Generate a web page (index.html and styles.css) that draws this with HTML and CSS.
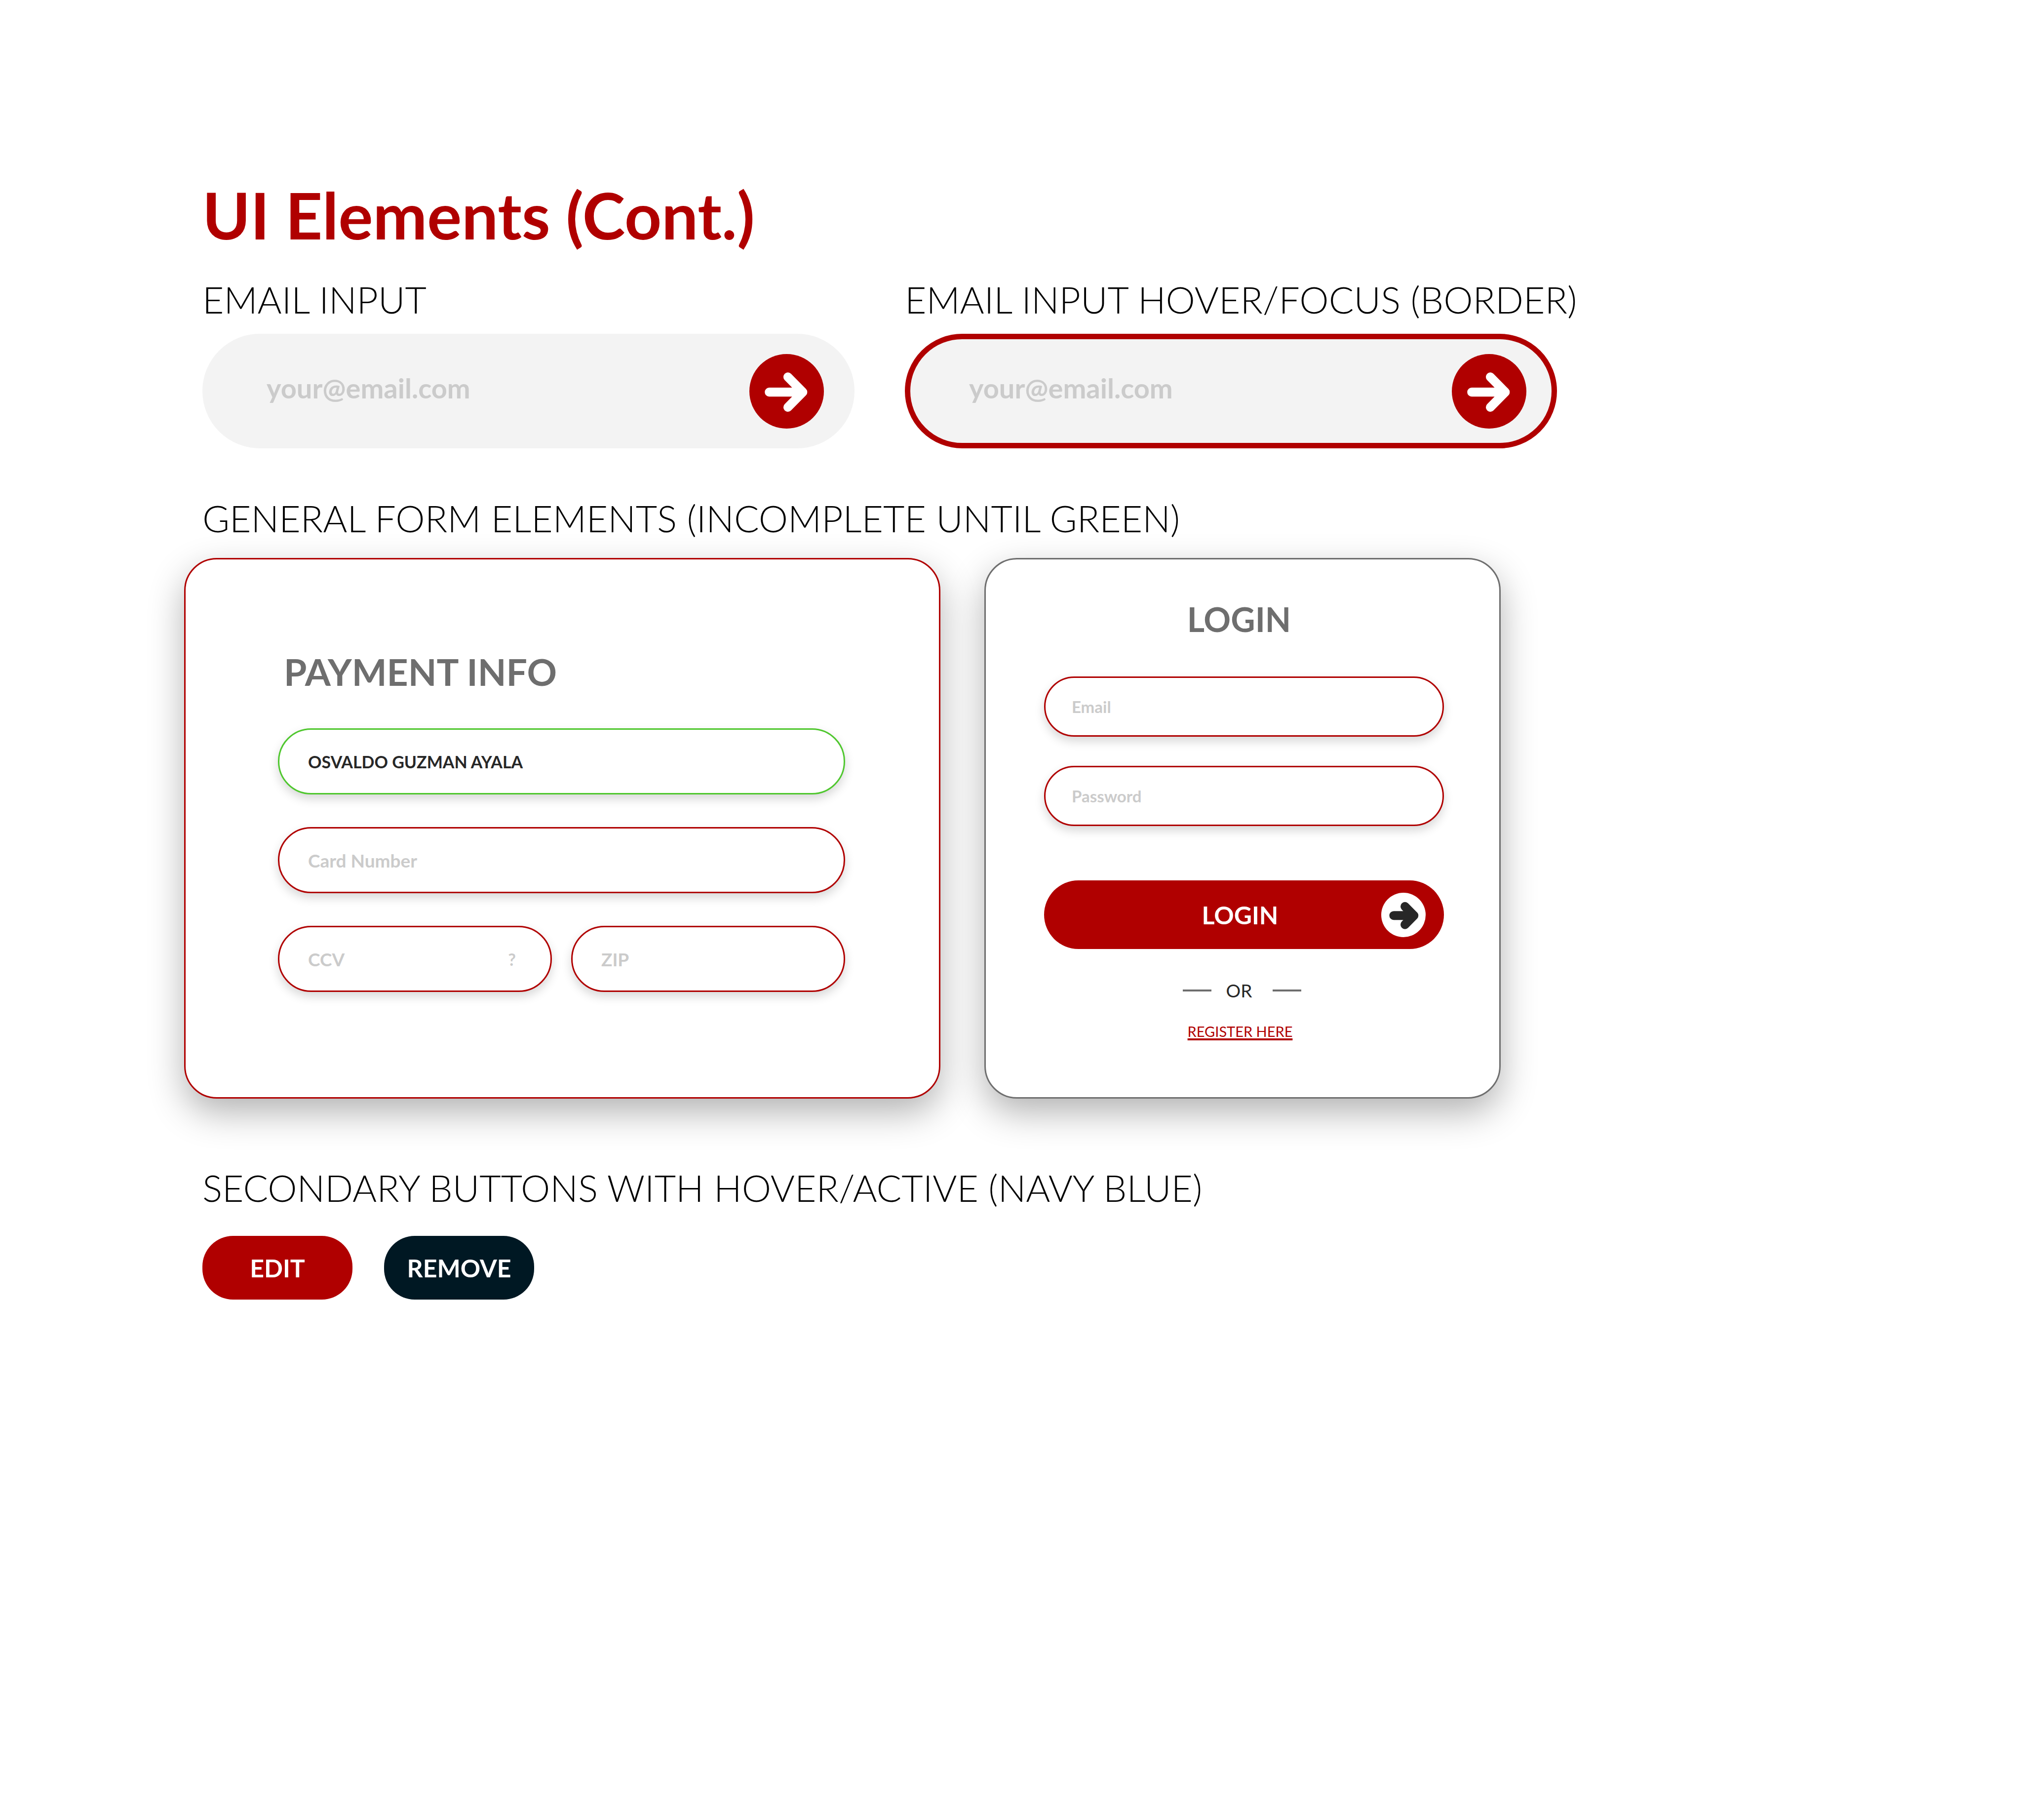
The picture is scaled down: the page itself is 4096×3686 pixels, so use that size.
FILE: index.html
```html
<!DOCTYPE html>
<html lang="en">
<head>
  <meta charset="utf-8">
  <meta name="viewport" content="width=device-width, initial-scale=1">
  <title>UI Elements (Cont.)</title>
  <link rel="stylesheet" href="styles.css">
</head>
<body>
  <main class="page">
    <h1 class="page-title">UI Elements (Cont.)</h1>

    <div class="email-grid">
      <form class="email-block">
        <label class="section-label" for="email-default">EMAIL INPUT</label>
        <div class="email-pill">
          <input class="email-input" id="email-default" type="email" placeholder="your@email.com">
          <button class="round-button" type="button" aria-label="Submit email">
            <svg class="round-icon" viewBox="0 0 184 184" aria-hidden="true"><path class="arrow" d="M49 94H132M95 56.500L132 94L95 131.500"/></svg>
          </button>
        </div>
      </form>
      <form class="email-block">
        <label class="section-label" for="email-focus">EMAIL INPUT HOVER/FOCUS (BORDER)</label>
        <div class="email-pill email-pill-active">
          <input class="email-input" id="email-focus" type="email" placeholder="your@email.com">
          <button class="round-button" type="button" aria-label="Submit email">
            <svg class="round-icon" viewBox="0 0 184 184" aria-hidden="true"><path class="arrow" d="M49 94H132M95 56.500L132 94L95 131.500"/></svg>
          </button>
        </div>
      </form>
    </div>

    <section class="forms">
      <h2 class="section-label">GENERAL FORM ELEMENTS (INCOMPLETE UNTIL GREEN)</h2>
      <div class="cards">
        <form class="card payment">
          <h3 class="card-title payment-title">PAYMENT INFO</h3>
          <div class="payment-fields">
            <div class="field field-valid">
              <input class="field-input" type="text" aria-label="Name on card" value="OSVALDO GUZMAN AYALA">
            </div>
            <div class="field">
              <input class="field-input" type="text" aria-label="Card Number" placeholder="Card Number">
            </div>
            <div class="field-row">
              <div class="field">
                <input class="field-input" type="text" aria-label="CCV" placeholder="CCV">
                <button class="field-help" type="button">?</button>
              </div>
              <div class="field">
                <input class="field-input" type="text" aria-label="ZIP" placeholder="ZIP">
              </div>
            </div>
          </div>
        </form>

        <form class="card login">
          <h3 class="card-title login-title">LOGIN</h3>
          <div class="login-fields">
            <div class="field field-small">
              <input class="field-input" type="email" aria-label="Email" placeholder="Email">
            </div>
            <div class="field field-small">
              <input class="field-input" type="password" aria-label="Password" placeholder="Password">
            </div>
          </div>
          <button class="login-button" type="button">
            <span class="login-text">LOGIN</span>
            <svg class="login-icon" viewBox="0 0 110 110" aria-hidden="true"><circle class="disc" cx="55" cy="55" r="55"/><path class="arrow arrow-dark" d="M31 56.500H81M58.700 34L81 56.500L58.700 79"/></svg>
          </button>
          <div class="divider"><span class="divider-text">OR</span></div>
          <a class="register" href="#register">REGISTER HERE</a>
        </form>
      </div>
    </section>

    <section class="buttons">
      <h2 class="section-label">SECONDARY BUTTONS WITH HOVER/ACTIVE (NAVY BLUE)</h2>
      <div class="button-row">
        <button class="button" type="button">EDIT</button>
        <button class="button button-active" type="button">REMOVE</button>
      </div>
    </section>
  </main>
</body>
</html>
```
FILE: styles.css
```css
:root {
  --red: #b00000;
  --navy: #001823;
  --green: #4fc72e;
  --grey: #6e6e6e;
  --ink: #272727;
  --hint: #cbcbcb;
  --fill: #f3f3f3;
}

*,
*::before,
*::after {
  box-sizing: border-box;
}

body {
  margin: 0;
  background: #fff;
  color: #000;
  font-family: Lato, "Open Sans", sans-serif;
}

h1,
h2,
h3 {
  margin: 0;
}

input,
button {
  margin: 0;
  padding: 0;
  border: 0;
  background: none;
  color: inherit;
  font-family: inherit;
  font-weight: 700;
}

input {
  flex: 1;
  min-width: 0;
  outline: none;
}

input::placeholder {
  color: var(--hint);
  opacity: 1;
}

button {
  cursor: pointer;
}

.page {
  min-height: 100vh;
  padding: 357px 410px;
}

.page-title {
  margin-bottom: 48px;
  color: var(--red);
  font-size: 131px;
  line-height: 156px;
}

.section-label {
  display: block;
  font-size: 75px;
  font-weight: 300;
  line-height: 90px;
  white-space: nowrap;
}

/* Email inputs */

.email-grid {
  display: grid;
  grid-template-columns: repeat(2, minmax(0, 1321px));
  gap: 102px;
}

.email-pill {
  display: flex;
  align-items: center;
  height: 232px;
  margin-top: 25px;
  padding: 0 51px 0 119px;
  border: 11px solid var(--fill);
  border-radius: 116px;
  background: var(--fill);
}

.email-pill-active {
  border-color: var(--red);
}

.email-input {
  height: 100%;
  padding-bottom: 14px;
  font-size: 56px;
}

.round-button {
  width: 151px;
  height: 151px;
  border-radius: 50%;
  background: var(--red);
}

.round-icon {
  display: block;
  width: 100%;
  height: 100%;
}

.arrow {
  fill: none;
  stroke: #fff;
  stroke-width: 22;
  stroke-linecap: round;
  stroke-linejoin: round;
}

.arrow-dark {
  stroke: var(--ink);
}

.disc {
  fill: #fff;
}

/* Cards */

.forms {
  margin-top: 96px;
}

.cards {
  display: grid;
  grid-template-columns: minmax(0, 1532px) minmax(0, 1046px);
  gap: 89px;
  margin: 36px 0 0 -37px;
}

.card {
  display: flex;
  flex-direction: column;
  border: 3px solid var(--red);
  border-radius: 66px;
  background: #fff;
  box-shadow: 0 28px 72px rgba(0, 0, 0, 0.3);
}

.card-title {
  color: var(--grey);
}

.payment {
  padding: 182px 190px 213px 187px;
}

.payment-title {
  padding-left: 12px;
  font-size: 75px;
  line-height: 90px;
}

.payment-fields {
  display: flex;
  flex-direction: column;
  gap: 66px;
  margin-top: 70px;
}

.field-row {
  display: grid;
  grid-template-columns: 1fr 1fr;
  gap: 39px;
}

.field {
  display: flex;
  align-items: center;
  height: 134px;
  min-width: 0;
  padding: 0 70px 0 58px;
  border: 3px solid var(--red);
  border-radius: 67px;
  background: #fff;
  box-shadow: 0 9px 20px rgba(0, 0, 0, 0.16);
}

.field-valid {
  border-color: var(--green);
}

.field-input {
  height: 100%;
  font-size: 37px;
}

.field-valid .field-input {
  color: var(--ink);
  font-size: 34px;
}

.field-help {
  color: var(--hint);
  font-size: 34px;
}

.login {
  padding: 80px 112px 100px 118px;
  border-color: var(--grey);
}

.login-title {
  padding-right: 20px;
  font-size: 68px;
  line-height: 82px;
  text-align: center;
}

.login-fields {
  display: flex;
  flex-direction: column;
  gap: 59px;
  margin-top: 75px;
}

.field-small {
  height: 122px;
  padding: 0 52px 0 53px;
}

.field-small .field-input {
  font-size: 33px;
}

.login-button {
  display: grid;
  grid-template-columns: 90px 1fr 90px;
  align-items: center;
  height: 139px;
  margin-top: 110px;
  padding: 0 37px;
  border-radius: 70px;
  background: var(--red);
  color: #fff;
  font-size: 50px;
}

.login-text {
  grid-column: 2;
  padding-right: 16px;
}

.login-icon {
  width: 90px;
  height: 90px;
}

.divider {
  display: flex;
  align-items: center;
  justify-content: center;
  gap: 30px;
  margin-top: 61px;
  padding-right: 8px;
  color: var(--ink);
  font-size: 37px;
  font-weight: 400;
  line-height: 46px;
}

.divider::before,
.divider::after {
  width: 58px;
  height: 4px;
  background: var(--grey);
  content: "";
}

.divider-text {
  padding-right: 12px;
}

.register {
  align-self: center;
  margin: 42px 16px 0 0;
  color: var(--red);
  font-size: 29px;
  font-weight: 400;
  line-height: 36px;
  text-decoration-thickness: 4px;
  text-decoration-skip-ink: none;
  text-underline-offset: 3px;
}

/* Secondary buttons */

.buttons {
  margin-top: 135px;
}

.button-row {
  display: flex;
  gap: 64px;
  margin-top: 53px;
}

.button {
  width: 304px;
  height: 129px;
  border-radius: 62px;
  background: var(--red);
  color: #fff;
  font-size: 50px;
}

.button:hover,
.button-active {
  background: var(--navy);
}
```
